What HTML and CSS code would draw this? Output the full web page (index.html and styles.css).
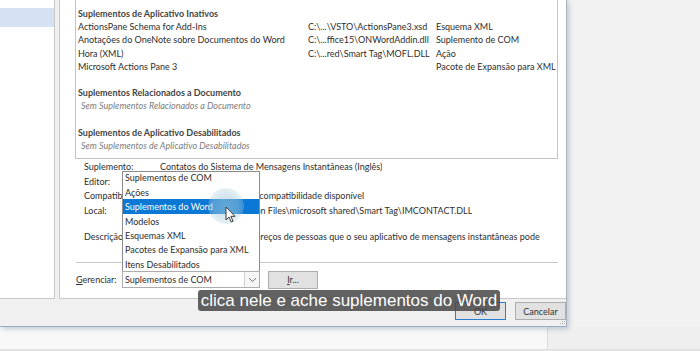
FILE: index.html
```html
<!DOCTYPE html>
<html lang="pt-BR">
<head>
<meta charset="utf-8">
<title>Opções do Word - Suplementos</title>
<link rel="stylesheet" href="styles.css">
</head>
<body>
<div class="screen">
  <div class="upper">
    <div class="dialog">
      <div class="panes">
        <nav class="nav">
          <div class="nav-item selected"></div>
        </nav>
        <main class="content">
          <div class="addin-list">
            <section class="group">
              <div class="group-title">Suplementos de Aplicativo Inativos</div>
              <div class="row"><span>ActionsPane Schema for Add-Ins</span><span>C:\...\VSTO\ActionsPane3.xsd</span><span>Esquema XML</span></div>
              <div class="row"><span>Anotações do OneNote sobre Documentos do Word</span><span>C:\...ffice15\ONWordAddin.dll</span><span>Suplemento de COM</span></div>
              <div class="row"><span>Hora (XML)</span><span>C:\...red\Smart Tag\MOFL.DLL</span><span>Ação</span></div>
              <div class="row"><span>Microsoft Actions Pane 3</span><span></span><span>Pacote de Expansão para XML</span></div>
            </section>
            <section class="group">
              <div class="group-title">Suplementos Relacionados a Documento</div>
              <div class="empty">Sem Suplementos Relacionados a Documento</div>
            </section>
            <section class="group last">
              <div class="group-title">Suplementos de Aplicativo Desabilitados</div>
              <div class="empty">Sem Suplementos de Aplicativo Desabilitados</div>
            </section>
          </div>
          <div class="details">
            <div class="detail"><span class="label">Suplemento:</span><span class="value">Contatos do Sistema de Mensagens Instantâneas (Inglês)</span></div>
            <div class="detail"><span class="label">Editor:</span><span class="value"></span></div>
            <div class="detail"><span class="label">Compatibilidade:</span><span class="value">Nenhuma informação de compatibilidade disponível</span></div>
            <div class="detail"><span class="label">Local:</span><span class="value">C:\Program Files\Common Files\microsoft shared\Smart Tag\IMCONTACT.DLL</span></div>
            <div class="detail desc"><span class="label">Descrição:</span><span class="value">Procura e mostra os endereços de pessoas que o seu aplicativo de mensagens instantâneas pode</span></div>
          </div>
          <div class="separator"></div>
          <div class="manage">
            <span class="manage-label"><u>G</u>erenciar:</span>
            <div class="select-wrap">
              <ul class="dropdown">
                <li>Suplementos de COM</li>
                <li>Ações</li>
                <li class="active">Suplementos do Word</li>
                <li>Modelos</li>
                <li>Esquemas XML</li>
                <li>Pacotes de Expansão para XML</li>
                <li>Itens Desabilitados</li>
              </ul>
              <div class="select">
                <span class="select-text">Suplementos de COM</span>
                <span class="select-arrow"><svg width="9" height="6" viewBox="0 0 9 6"><path d="M1 1.2 L4.5 4.6 L8 1.2" fill="none" stroke="#6d6d6d" stroke-width="1"/></svg></span>
              </div>
            </div>
            <button class="btn go"><u>I</u>r...</button>
          </div>
        </main>
      </div>
      <div class="footer">
        <button class="btn ok">OK</button>
        <button class="btn cancel">Cancelar</button>
        <svg class="grip" width="6" height="6" viewBox="0 0 6 6"><g fill="#b5b5b5"><rect x="4" y="0" width="1" height="1"/><rect x="2" y="2" width="1" height="1"/><rect x="4" y="2" width="1" height="1"/><rect x="0" y="4" width="1" height="1"/><rect x="2" y="4" width="1" height="1"/><rect x="4" y="4" width="1" height="1"/></g></svg>
      </div>
    </div>
    <div class="backdrop"></div>
  </div>
  <div class="lower">
    <div class="lower-left"></div>
    <div class="lower-right"></div>
  </div>

  <div class="click-glow"></div>
  <svg class="cursor" width="12" height="18" viewBox="0 0 12 18"><path d="M1 1 L1 14 L4 11 L6.2 16 L8 15.2 L5.9 10.3 L10 10.3 Z" fill="#ffffff" stroke="#3a3a3a" stroke-width="1" stroke-linejoin="round"/></svg>
  <div class="caption">clica nele e ache suplementos do Word</div>
</div>
</body>
</html>
```

FILE: styles.css
```css
* { box-sizing: border-box; }
html, body { margin: 0; padding: 0; }
body {
  width: 700px;
  height: 351px;
  overflow: hidden;
  background: #f3f2f2;
  font-family: Lato, "Open Sans", sans-serif;
  font-size: 9px;
  color: #2e2e2e;
}
.screen {
  position: relative;
  width: 700px;
  height: 351px;
  display: flex;
  flex-direction: column;
}
.upper {
  height: 327px;
  display: flex;
}
.dialog {
  width: 567px;
  height: 327px;
  flex: none;
  display: flex;
  flex-direction: column;
  background: #f0f0f0;
  border-right: 1px solid #a7b2bd;
  border-bottom: 1px solid #98adc2;
  box-shadow: 2px 2px 5px rgba(90, 120, 150, 0.35);
  position: relative;
  z-index: 1;
}
.panes {
  height: 299px;
  display: flex;
  gap: 4px;
}
.nav {
  width: 55px;
  flex: none;
  background: #fff;
  border-right: 1px solid #c8c8c8;
  border-bottom: 1px solid #c8c8c8;
  padding-top: 8px;
}
.nav-item.selected {
  width: 54px;
  height: 19px;
  background: #d6e2f3;
}
.content {
  flex: 1;
  min-width: 0;
  background: #fff;
  border-left: 1px solid #c8c8c8;
  border-bottom: 1px solid #c8c8c8;
  display: flex;
  flex-direction: column;
}
.addin-list {
  margin: 0 8px 0 15px;
  border: 1px solid #c4c4c4;
  border-top: none;
  padding: 7px 0 6px 2px;
  line-height: 13.2px;
}
.group { margin-bottom: 13.2px; }
.group.last { margin-bottom: 0; }
.group-title {
  font-weight: 700;
  color: #444;
}
.row {
  display: grid;
  grid-template-columns: 230px 128px 1fr;
  white-space: nowrap;
}
.empty {
  font-style: italic;
  color: #7d7d7d;
  padding-left: 3px;
}
.details {
  padding: 1px 0 0 24px;
  line-height: 14.5px;
}
.detail {
  display: flex;
  white-space: nowrap;
  overflow: hidden;
}
.detail.desc { margin-top: 12px; }
.label { width: 76px; flex: none; }
.value { overflow: hidden; max-width: 380px; }
.separator {
  margin: 17px 8px 0 16px;
  border-top: 1px solid #c8c8c8;
}
.manage {
  display: flex;
  align-items: center;
  margin: 8px 0 0 16px;
  height: 18px;
}
.manage-label { width: 46px; white-space: nowrap; }
.select-wrap {
  position: relative;
  width: 138px;
}
.select {
  height: 17px;
  border: 1px solid #adadad;
  display: flex;
  align-items: center;
  padding-left: 2px;
  background: #fff;
}
.select-text { flex: 1; }
.select-arrow {
  width: 15px;
  height: 15px;
  border-left: 1px solid #d0d0d0;
  display: flex;
  align-items: center;
  justify-content: center;
  background: #f6f6f6;
}
.dropdown {
  position: absolute;
  left: 0;
  right: 0;
  bottom: 100%;
  margin: 0;
  padding: 0;
  list-style: none;
  background: #fff;
  border: 1px solid #8c8c8c;
  border-bottom: none;
  z-index: 3;
}
.dropdown li {
  height: 14.4px;
  line-height: 13.4px;
  padding: 1px 0 0 2px;
  white-space: nowrap;
}
.dropdown li:first-child {
  height: 12.9px;
  line-height: 11.6px;
  padding-top: 0;
}
.dropdown li.active {
  background: #0a78d4;
  color: #fff;
}
.btn {
  font-family: inherit;
  font-size: 9px;
  color: #333;
  background: #e1e1e1;
  border: 1px solid #adadad;
  height: 18px;
  padding: 0;
}
.go {
  margin-left: 8px;
  width: 50px;
}
.footer {
  position: relative;
  height: 27px;
  display: flex;
  justify-content: flex-end;
  align-items: flex-start;
  gap: 9px;
  padding: 3px 0 0 0;
}
.ok {
  width: 51px;
  border-color: #2a7fd4;
}
.cancel { width: 51px; }
.grip {
  position: absolute;
  right: 0;
  bottom: 1px;
}
.backdrop {
  flex: 1;
  background: #f3f2f2;
}
.lower {
  flex: 1;
  display: flex;
  border-bottom: 2px solid #e2e2e2;
}
.lower-left {
  width: 548px;
  background: #f8f8f8;
  border-right: 1px solid #dadada;
}
.lower-right {
  flex: 1;
  background: #f0efef;
}
.click-glow {
  position: absolute;
  left: 208px;
  top: 188px;
  width: 36px;
  height: 36px;
  border-radius: 50%;
  background: radial-gradient(circle, rgba(160, 200, 215, 0.6) 0%, rgba(170, 205, 220, 0.45) 50%, rgba(190, 215, 225, 0) 100%);
  z-index: 4;
}
.cursor {
  position: absolute;
  left: 225px;
  top: 206px;
  z-index: 5;
}
.caption {
  position: absolute;
  left: 198px;
  top: 290px;
  width: 302px;
  height: 21px;
  border-radius: 3px;
  background: rgba(70, 70, 70, 0.85);
  color: #fff;
  font-family: "Liberation Sans", Arial, sans-serif;
  font-size: 17px;
  line-height: 21px;
  text-align: center;
  white-space: nowrap;
  z-index: 6;
}
```
